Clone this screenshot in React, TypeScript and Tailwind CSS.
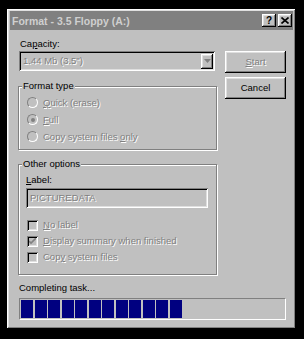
import React from "react";

const raised =
  "shadow-[inset_-1px_-1px_0_#000,inset_1px_1px_0_#fff,inset_-2px_-2px_0_#808080,inset_2px_2px_0_#dfdfdf]";
const sunken =
  "shadow-[inset_1px_1px_0_#808080,inset_-1px_-1px_0_#fff,inset_2px_2px_0_#000,inset_-2px_-2px_0_#dfdfdf]";
const etched = "border border-[#808080] shadow-[inset_1px_1px_0_#fff,1px_1px_0_#fff]";
const dim = "text-[#808080] [text-shadow:1px_1px_0_#fff]";

function Radio({ label, accel, rest, checked }: { label?: string; accel: string; rest: string; checked?: boolean }) {
  return (
    <div className="flex items-center h-[17px]">
      <div className="w-[11px] h-[11px] rounded-full border border-[#808080] border-r-white border-b-white bg-[#c0c0c0] flex items-center justify-center">
        {checked && <div className="w-[4px] h-[4px] rounded-full bg-[#808080]" />}
      </div>
      <span className={`ml-[5px] ${dim}`}>
        {label}
        <span className="underline">{accel}</span>
        {rest}
      </span>
    </div>
  );
}

function Check({ pre, accel, rest, checked }: { pre?: string; accel: string; rest: string; checked?: boolean }) {
  return (
    <div className="flex items-center h-[16px]">
      <div className={`w-[11px] h-[11px] bg-[#c0c0c0] ${sunken} flex items-center justify-center`}>
        {checked && (
          <svg width="7" height="7" viewBox="0 0 7 7">
            <path d="M0 3 L2 5 L7 0" stroke="#808080" strokeWidth="1.6" fill="none" />
          </svg>
        )}
      </div>
      <span className={`ml-[5px] ${dim}`}>
        {pre}
        <span className="underline">{accel}</span>
        {rest}
      </span>
    </div>
  );
}

export default function App() {
  return (
    <div className="w-[304px] h-[339px] bg-black pt-[9px] pl-[7px] font-['Liberation_Sans',Arial,sans-serif] text-[9.5px] leading-[12px] text-black">
      <div className={`w-[289px] h-[320px] bg-[#c0c0c0] p-[3px] flex flex-col ${raised}`}>
        {/* title bar */}
        <div className="h-[19px] -mt-[1px] bg-[#808080] flex items-center justify-between pl-[2px] pr-[1px]">
          <span className="text-[10.5px] font-bold text-[#cfcfcf]">Format - 3.5 Floppy (A:)</span>
          <div className="flex gap-[2px]">
            <div className={`w-[14px] h-[13px] bg-[#c0c0c0] ${raised} flex items-center justify-center text-[10px] font-bold leading-none`}>?</div>
            <div className={`w-[14px] h-[13px] bg-[#c0c0c0] ${raised} flex items-center justify-center`}>
              <svg width="8" height="7" viewBox="0 0 8 7">
                <path d="M0.5 0.5 L7.5 6.5 M7.5 0.5 L0.5 6.5" stroke="#000" strokeWidth="1.6" />
              </svg>
            </div>
          </div>
        </div>

        {/* body */}
        <div className="pl-[8px] pt-[8px] flex flex-col">
          <div className="flex">
            <div className="w-[199px] flex flex-col">
              <div className="h-[12px] pl-[2px]">
                Ca<span className="underline">p</span>acity:
              </div>
              <div className={`mt-[1px] ml-[1px] w-[196px] h-[20px] bg-[#c0c0c0] ${sunken} flex items-center justify-between pl-[4px] pr-[2px]`}>
                <span className={dim}>1.44 Mb (3.5")</span>
                <div className={`w-[12px] h-[15px] bg-[#c0c0c0] ${raised} flex items-center justify-center`}>
                  <svg width="7" height="4" viewBox="0 0 7 4">
                    <path d="M0 0 H7 L3.5 4 Z" fill="#808080" />
                  </svg>
                </div>
              </div>

              <div className={`relative mt-[15px] h-[64px] ${etched} pt-[7px] pl-[8px]`}>
                <span className="absolute -top-[7px] left-[3px] px-[1px] bg-[#c0c0c0]">Format type</span>
                <Radio accel="Q" rest="uick (erase)" />
                <Radio accel="F" rest="ull" checked />
                <Radio label="Copy system files " accel="o" rest="nly" />
              </div>

              <div className={`relative mt-[14px] h-[111px] ${etched} pt-[9px] pl-[7px]`}>
                <span className="absolute -top-[7px] left-[3px] px-[1px] bg-[#c0c0c0]">Other options</span>
                <div className="h-[12px]">
                  <span className="underline">L</span>abel:
                </div>
                <div className={`mt-[2px] w-[182px] h-[20px] bg-[#c0c0c0] ${sunken} flex items-center pl-[4px]`}>
                  <span className={dim}>PICTUREDATA</span>
                </div>
                <div className="mt-[9px] pl-[1px]">
                  <Check accel="N" rest="o label" />
                  <Check accel="D" rest="isplay summary when finished" checked />
                  <Check pre="Cop" accel="y" rest=" system files" />
                </div>
              </div>
            </div>

            <div className="ml-[8px] mt-[13px] flex flex-col gap-[4px]">
              <div className={`w-[61px] h-[22px] bg-[#c0c0c0] ${raised} flex items-center justify-center`}>
                <span className={dim}>
                  <span className="underline">S</span>tart
                </span>
              </div>
              <div className={`w-[61px] h-[22px] bg-[#c0c0c0] ${raised} flex items-center justify-center`}>Cancel</div>
            </div>
          </div>

          <div className="mt-[7px] h-[12px] pl-[1px]">Completing task...</div>
          <div className="mt-[4px] ml-[1px] w-[267px] h-[22px] border border-[#808080] border-r-white border-b-white p-[1px] flex gap-[1.5px]">
            {Array.from({ length: 12 }).map((_, i) => (
              <div key={i} className="w-[12px] h-full bg-[#000080]" />
            ))}
          </div>
        </div>
      </div>
    </div>
  );
}
